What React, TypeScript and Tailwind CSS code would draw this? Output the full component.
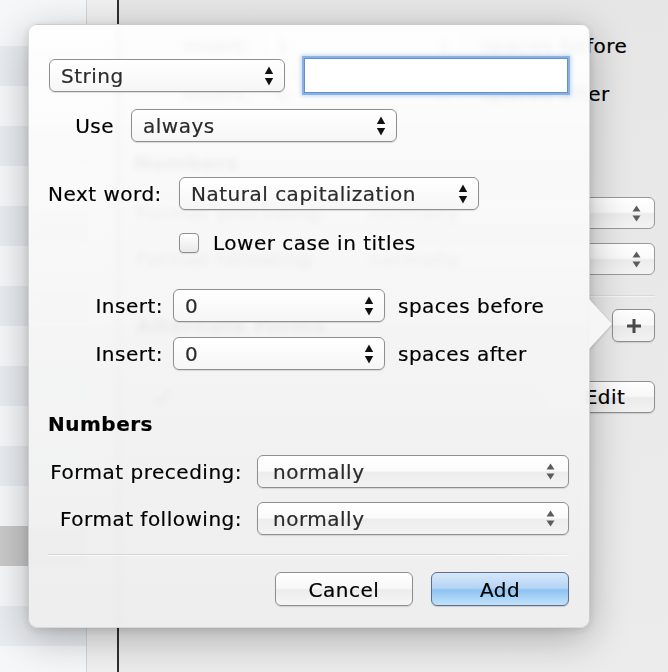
import React from "react";

const FONT = { fontFamily: '"DejaVu Sans", "Liberation Sans", sans-serif' };

function Arrows({ gray }: { gray?: boolean }) {
  if (gray) {
    return (
      <svg width="9" height="17" viewBox="0 0 9 17" className="shrink-0">
        <polygon points="4.5,0.5 0.5,6.5 8.5,6.5" fill="#5c5c5c" />
        <polygon points="0.5,10.5 8.5,10.5 4.5,16.5" fill="#5c5c5c" />
      </svg>
    );
  }
  return (
    <svg width="10" height="20" viewBox="0 0 10 20" className="shrink-0">
      <polygon points="5,0.5 0.8,8 9.2,8" fill="#111" />
      <polygon points="0.8,12 9.2,12 5,19.5" fill="#111" />
    </svg>
  );
}

function Popup({
  text,
  w,
  gloss,
}: {
  text: string;
  w: string;
  gloss?: boolean;
}) {
  return (
    <div
      className={`flex items-center justify-between h-[33px] rounded-[6px] border border-[#8f8f8f] shadow-[0_1px_1px_rgba(0,0,0,0.12)] ${
        gloss
          ? "bg-[linear-gradient(to_bottom,#ffffff_0%,#fbfbfb_47%,#ededed_53%,#f3f3f3_100%)] pl-[15px] pr-[13px]"
          : "bg-[linear-gradient(to_bottom,#ffffff_0%,#f6f6f6_100%)] pl-[11px] pr-[10px]"
      } ${w}`}
    >
      <span className="text-[#2b2b2b] leading-none">{text}</span>
      <Arrows gray={gloss} />
    </div>
  );
}

function BgPopup({ text, w }: { text: string; w: string }) {
  return (
    <div
      className={`flex items-center justify-between h-[32px] rounded-[6px] border border-[#999] bg-[linear-gradient(to_bottom,#ffffff_0%,#fafafa_47%,#ececec_53%,#f3f3f3_100%)] pl-[12px] pr-[13px] ${w}`}
    >
      <span className="text-[#2b2b2b] leading-none">{text}</span>
      <Arrows gray />
    </div>
  );
}

const stripes = [
  "h-[46px] bg-[#f6f7f9]",
  "h-[40px] bg-[#e9ecf0]",
  "h-[40px] bg-[#f6f7f9]",
  "h-[40px] bg-[#e9ecf0]",
  "h-[40px] bg-[#f6f7f9]",
  "h-[40px] bg-[#e9ecf0]",
  "h-[40px] bg-[#f6f7f9]",
  "h-[40px] bg-[#e9ecf0]",
  "h-[40px] bg-[#f6f7f9]",
  "h-[40px] bg-[#e9ecf0]",
  "h-[40px] bg-[#f6f7f9]",
  "h-[40px] bg-[#e9ecf0]",
  "h-[40px] bg-[#f6f7f9]",
  "h-[40px] bg-[#c9c9c9]",
  "h-[40px] bg-[#f6f7f9]",
  "h-[40px] bg-[#e9ecf0]",
  "h-[40px] bg-[#f6f7f9]",
];

export default function App() {
  return (
    <div
      className="relative w-[668px] h-[672px] overflow-hidden flex text-[20px] tracking-[0.5px] text-black bg-[#e8e8e8] [-webkit-text-stroke:0.2px_currentColor]"
      style={FONT}
    >
      {/* sidebar */}
      <div className="w-[86px] flex flex-col shrink-0">
        {stripes.map((c, i) => (
          <div key={i} className={`${c} shrink-0`} />
        ))}
      </div>
      <div className="w-[31px] shrink-0 bg-[#f1f1f1] border-l border-[#d6d6d6]" />
      <div className="w-[2px] shrink-0 bg-[#2f2f2f]" />

      {/* background pane */}
      <div className="flex-1 flex flex-col pl-[15px] pr-[13px] bg-[linear-gradient(to_bottom,#e6e6e6,#ececec)]">
        <div className="mt-[30px] h-[32px] flex items-center">
          <div className="w-[117px] text-right">Insert:</div>
          <div className="ml-[12px]">
            <BgPopup text="1" w="w-[200px]" />
          </div>
          <div className="ml-[18px]">spaces before</div>
        </div>
        <div className="mt-[16px] h-[32px] flex items-center">
          <div className="w-[117px] text-right">Insert:</div>
          <div className="ml-[12px]">
            <BgPopup text="0" w="w-[200px]" />
          </div>
          <div className="ml-[18px]">spaces after</div>
        </div>
        <div className="mt-[40px] h-[26px] font-bold flex items-center">Numbers</div>
        <div className="mt-[21px] h-[32px] flex items-center">
          <div className="pl-[2px]">Format preceding:</div>
          <div className="ml-auto">
            <BgPopup text="normally" w="w-[300px]" />
          </div>
        </div>
        <div className="mt-[14px] h-[32px] flex items-center">
          <div className="pl-[2px]">Format following:</div>
          <div className="ml-auto">
            <BgPopup text="normally" w="w-[300px]" />
          </div>
        </div>
        <div className="mt-[20px] h-[2px] bg-[#d9d9d9] border-b border-[#f4f4f4]" />
        <div className="mt-[12px] h-[33px] flex items-center">
          <div className="pl-[2px] font-bold">Alternate Forms</div>
          <div className="ml-auto w-[43px] h-[33px] rounded-[6px] border border-[#8f8f8f] bg-[linear-gradient(to_bottom,#ffffff_0%,#f8f8f8_47%,#ebebeb_53%,#f2f2f2_100%)] shadow-[0_1px_1px_rgba(0,0,0,0.12)] flex items-center justify-center">
            <svg width="16" height="16" viewBox="0 0 16 16">
              <rect x="6.5" y="1" width="3" height="14" fill="#4a4a4a" />
              <rect x="1" y="6.5" width="14" height="3" fill="#4a4a4a" />
            </svg>
          </div>
        </div>
        <div className="mt-[39px] h-[32px] flex items-center">
          <div className="pl-[17px]">
            <svg width="22" height="22" viewBox="0 0 22 22">
              <path d="M3 12 L8 18 L19 3" stroke="#333" strokeWidth="3" fill="none" />
            </svg>
          </div>
          <div className="ml-auto w-[114px] h-[32px] pl-[14px] rounded-[6px] border border-[#8f8f8f] bg-[linear-gradient(to_bottom,#ffffff_0%,#f8f8f8_47%,#ebebeb_53%,#f2f2f2_100%)] shadow-[0_1px_1px_rgba(0,0,0,0.12)] flex items-center justify-center">
            Edit
          </div>
        </div>
      </div>

      {/* popover */}
      <div className="absolute left-[28px] top-[24px] w-[562px] h-[604px] rounded-[9px] border border-[rgba(0,0,0,0.14)] shadow-[0_10px_40px_rgba(0,0,0,0.28),0_2px_8px_rgba(0,0,0,0.12)] backdrop-blur-[3px] bg-[linear-gradient(to_bottom,rgba(254,254,254,0.95),rgba(237,237,237,0.96))] flex flex-col pl-[19px] pr-[20px] pt-[34px]">
        {/* arrow */}
        <svg
          width="24"
          height="50"
          viewBox="0 0 24 50"
          className="absolute left-[560px] top-[274px] drop-shadow-[1px_1px_1px_rgba(0,0,0,0.12)]"
        >
          <polygon points="0,0 23,25 0,50" fill="#f6f6f6" />
        </svg>

        {/* row 1 */}
        <div className="h-[33px] flex items-center">
          <div className="ml-px">
            <Popup text="String" w="w-[236px]" />
          </div>
          <div className="ml-[19px] w-[264px] h-[35px] bg-white border border-[#5f91d2] shadow-[0_0_0_2px_rgba(120,166,226,0.8),0_0_4px_3px_rgba(120,166,226,0.45)]" />
        </div>

        {/* row 2 */}
        <div className="mt-[17px] h-[33px] flex items-center">
          <div className="w-[66px] text-right">Use</div>
          <div className="ml-[17px]">
            <Popup text="always" w="w-[266px]" />
          </div>
        </div>

        {/* row 3 */}
        <div className="mt-[35px] h-[33px] flex items-center">
          <div className="w-[115px]">Next word:</div>
          <div className="ml-[16px]">
            <Popup text="Natural capitalization" w="w-[300px]" />
          </div>
        </div>

        {/* row 4 */}
        <div className="mt-[22px] h-[21px] flex items-center pl-[131px]">
          <div className="w-[20px] h-[20px] rounded-[4px] border border-[#8e8e8e] bg-[linear-gradient(to_bottom,#ffffff,#e9e9e9)] shadow-[0_1px_1px_rgba(0,0,0,0.1)]" />
          <div className="ml-[14px]">Lower case in titles</div>
        </div>

        {/* row 5 */}
        <div className="mt-[36px] h-[33px] flex items-center">
          <div className="w-[115px] text-right">Insert:</div>
          <div className="ml-[10px]">
            <Popup text="0" w="w-[212px]" />
          </div>
          <div className="ml-[13px]">spaces before</div>
        </div>

        {/* row 6 */}
        <div className="mt-[15px] h-[33px] flex items-center">
          <div className="w-[115px] text-right">Insert:</div>
          <div className="ml-[10px]">
            <Popup text="0" w="w-[212px]" />
          </div>
          <div className="ml-[13px]">spaces after</div>
        </div>

        {/* Numbers */}
        <div className="mt-[42px] h-[24px] flex items-center font-bold">Numbers</div>

        {/* row 8 */}
        <div className="mt-[19px] h-[33px] flex items-center">
          <div className="w-[194px] text-right">Format preceding:</div>
          <div className="ml-[15px]">
            <Popup text="normally" w="w-[312px]" gloss />
          </div>
        </div>

        {/* row 9 */}
        <div className="mt-[14px] h-[33px] flex items-center">
          <div className="w-[194px] text-right">Format following:</div>
          <div className="ml-[15px]">
            <Popup text="normally" w="w-[312px]" gloss />
          </div>
        </div>

        {/* separator */}
        <div className="mt-[19px] h-[2px] bg-[linear-gradient(to_right,#d4d4d4_0%,#d4d4d4_85%,rgba(212,212,212,0.2)_100%)] border-b border-[#fafafa]" />

        {/* buttons */}
        <div className="mt-[16px] h-[34px] flex justify-end gap-[18px]">
          <div className="w-[138px] h-[34px] pt-[2px] rounded-[6px] border border-[#8f8f8f] bg-[linear-gradient(to_bottom,#ffffff_0%,#f8f8f8_47%,#ececec_53%,#f6f6f6_100%)] shadow-[0_1px_1px_rgba(0,0,0,0.12)] flex items-center justify-center">
            Cancel
          </div>
          <div className="w-[138px] h-[34px] pt-[2px] rounded-[6px] border border-[#5b6f8e] bg-[linear-gradient(to_bottom,#d7e8f9_0%,#b5d4f5_47%,#8ec3f2_53%,#c2e2fb_100%)] shadow-[0_1px_1px_rgba(0,0,0,0.15)] flex items-center justify-center">
            Add
          </div>
        </div>
      </div>
    </div>
  );
}
